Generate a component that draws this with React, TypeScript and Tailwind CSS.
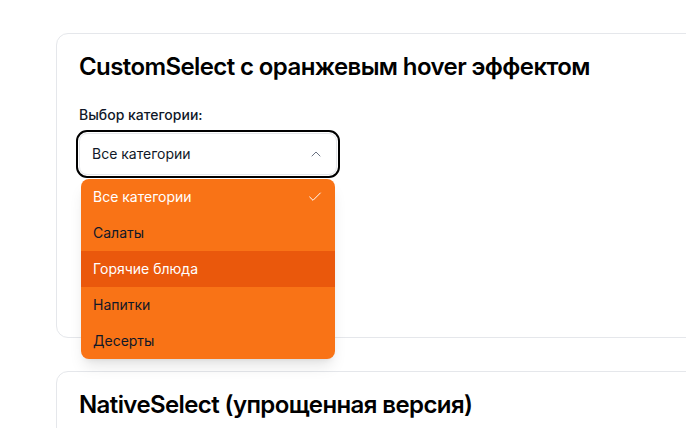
import React, { useState } from 'react';
import { Check, ChevronUp } from 'lucide-react';

const categories = [
  { value: 'all', label: 'Все категории' },
  { value: 'salads', label: 'Салаты' },
  { value: 'hot', label: 'Горячие блюда' },
  { value: 'drinks', label: 'Напитки' },
  { value: 'desserts', label: 'Десерты' },
];

const CustomSelect: React.FC<{ label: string }> = ({ label }) => {
  const [value, setValue] = useState('all');
  const [open, setOpen] = useState(true);
  const [hovered, setHovered] = useState<string | null>('hot');
  const current = categories.find((c) => c.value === value);

  return (
    <div>
      <label className="block text-sm font-medium text-gray-900 mb-2">{label}</label>
      <div className="relative w-[258px]">
        <button
          type="button"
          onClick={() => setOpen(!open)}
          className="w-full flex items-center justify-between px-3 py-2.5 text-sm text-gray-900 bg-white border border-gray-200 rounded-lg outline-2 outline-offset-1 outline-black"
        >
          <span>{current?.label}</span>
          <ChevronUp size={16} strokeWidth={1.5} className="text-gray-500" />
        </button>
        {open && (
          <ul className="absolute left-[2px] right-[2px] top-full mt-1 z-10 bg-[#f97316] rounded-lg shadow-lg overflow-hidden">
            {categories.map((c) => {
              const selected = c.value === value;
              const isHover = hovered === c.value;
              return (
                <li
                  key={c.value}
                  onMouseEnter={() => setHovered(c.value)}
                  onClick={() => { setValue(c.value); setOpen(false); }}
                  className={`flex items-center justify-between px-3 py-2 text-sm cursor-pointer ${
                    isHover ? 'bg-[#ea580c] text-white' : selected ? 'text-white' : 'text-gray-900'
                  }`}
                >
                  <span>{c.label}</span>
                  {selected && <Check size={16} strokeWidth={1.5} className="text-white" />}
                </li>
              );
            })}
          </ul>
        )}
      </div>
    </div>
  );
};

export default function App() {
  return (
    <div className="h-screen bg-white overflow-hidden pl-14 pt-[33px]" style={{ fontFamily: 'Inter, "Noto Sans", sans-serif' }}>
      <div className="w-[700px] flex flex-col gap-[33px]">
        <section className="bg-white border border-gray-200 rounded-xl px-[22px] pt-[17px] pb-6">
          <h2 className="text-2xl font-semibold tracking-tight text-black mb-[22px]">CustomSelect с оранжевым hover эффектом</h2>
          <CustomSelect label="Выбор категории:" />
          <div className="h-[138px]" />
        </section>
        <section className="bg-white border border-gray-200 rounded-xl px-[22px] pt-[17px] pb-6">
          <h2 className="text-2xl font-semibold tracking-tight text-black mb-[22px]">NativeSelect (упрощенная версия)</h2>
          <label className="block text-sm font-medium text-gray-900 mb-2">Выбор категории:</label>
          <select className="w-[258px] px-3 py-2.5 text-sm border border-gray-200 rounded-lg">
            {categories.map((c) => (
              <option key={c.value} value={c.value}>{c.label}</option>
            ))}
          </select>
        </section>
      </div>
    </div>
  );
}
